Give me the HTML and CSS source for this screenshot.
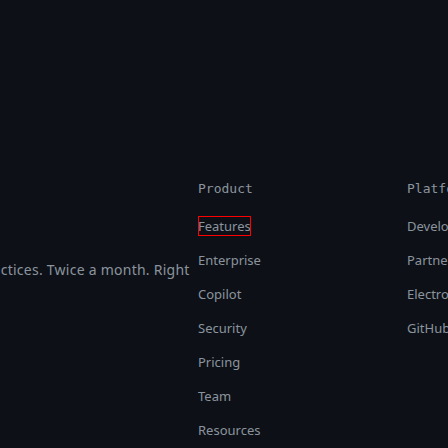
FILE: index.html
```
<!DOCTYPE html>
<html>
<head>
<meta charset="utf-8">
<link rel="stylesheet" href="styles.css">
</head>
<body>
<div class="footer">
  <div class="intro">
    <p class="blurb">practices. Twice a month. Right</p>
  </div>
  <div class="col col-product">
    <h3 class="heading">Product</h3>
    <ul class="links">
      <li><a class="link focused">Features</a></li>
      <li><a class="link">Enterprise</a></li>
      <li><a class="link">Copilot</a></li>
      <li><a class="link">Security</a></li>
      <li><a class="link">Pricing</a></li>
      <li><a class="link">Team</a></li>
      <li><a class="link">Resources</a></li>
    </ul>
  </div>
  <div class="col col-platform">
    <h3 class="heading">Platform</h3>
    <ul class="links">
      <li><a class="link">Developer API</a></li>
      <li><a class="link">Partners</a></li>
      <li><a class="link">Electron</a></li>
      <li><a class="link">GitHub Desktop</a></li>
    </ul>
  </div>
</div>
</body>
</html>
```
FILE: styles.css
```
html, body {
  margin: 0;
  padding: 0;
  background: #0d1117;
  width: 448px;
  height: 448px;
  overflow: hidden;
}
.footer {
  display: flex;
  width: 448px;
  overflow: hidden;
  padding-top: 180px;
  font-family: "Segoe UI", "Noto Sans", "Open Sans", sans-serif;
  color: #8b949e;
}
.intro {
  flex: 0 0 198px;
  overflow: hidden;
}
.blurb {
  margin: 80px 0 0 -22px;
  font-size: 14px;
  letter-spacing: 0.25px;
  line-height: 20px;
  white-space: nowrap;
  color: #8b949e;
}
.col {
  flex: 0 0 auto;
}
.col-product {
  width: 209px;
}
.heading {
  margin: 0;
  font-family: "DejaVu Sans Mono", "Liberation Mono", monospace;
  font-size: 13px;
  font-weight: normal;
  line-height: 18px;
  color: #8b949e;
  white-space: nowrap;
}
.links {
  list-style: none;
  margin: 16px 0 0;
  padding: 0;
}
.links li {
  height: 34px;
}
.link {
  display: inline-block;
  font-size: 13px;
  line-height: 20px;
  color: #8b949e;
  white-space: nowrap;
}
.focused {
  outline: 1px solid #ff0000;
  outline-offset: -1px;
}
```
